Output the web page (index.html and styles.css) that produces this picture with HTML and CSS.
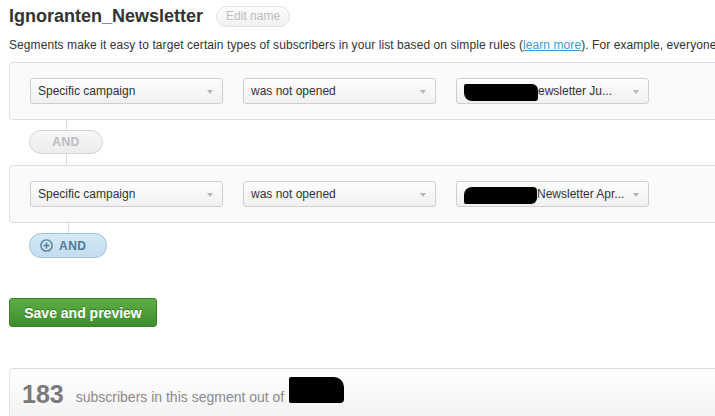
FILE: index.html
```html
<!DOCTYPE html>
<html lang="en">
<head>
    <meta charset="UTF-8" />
    <title>Ignoranten_Newsletter - Segment</title>
    <link rel="stylesheet" href="styles.css">
</head>
<body>
    <div class="page">
        <div class="title-row">
            <h1>Ignoranten_Newsletter</h1>
            <button class="edit-name" type="button">Edit name</button>
        </div>
        <p class="intro">Segments make it easy to target certain types of subscribers in your list based on simple rules (<a href="#">learn more</a>). For example, everyone</p>

        <div class="rule">
            <div class="select"><span class="select-text">Specific campaign</span><span class="caret"></span></div>
            <div class="select"><span class="select-text">was not opened</span><span class="caret"></span></div>
            <div class="select"><span class="select-text"><span class="redact"></span>ewsletter Ju...</span><span class="caret"></span></div>
        </div>

        <div class="connector">
            <span class="line line-top"></span>
            <button class="and-btn" type="button" disabled>AND</button>
            <span class="line line-bottom"></span>
        </div>

        <div class="rule">
            <div class="select"><span class="select-text">Specific campaign</span><span class="caret"></span></div>
            <div class="select"><span class="select-text">was not opened</span><span class="caret"></span></div>
            <div class="select"><span class="select-text"><span class="redact redact-2"></span>Newsletter Apr...</span><span class="caret"></span></div>
        </div>

        <div class="connector connector-last">
            <span class="line line-top"></span>
            <button class="add-and" type="button">
                <svg width="13" height="13" viewBox="0 0 13 13">
                    <circle cx="6.5" cy="6.5" r="5.6" fill="none" stroke="#4f7a99" stroke-width="1.4" />
                    <path d="M6.5 3.6v5.8M3.6 6.5h5.8" stroke="#4f7a99" stroke-width="1.4" />
                </svg>
                AND
            </button>
        </div>

        <button class="save-btn" type="button">Save and preview</button>

        <div class="summary">
            <span class="count">183</span>
            <span class="summary-text">subscribers in this segment out of</span>
            <span class="redact redact-total"></span>
        </div>
    </div>
</body>
</html>
```

FILE: styles.css
```css
html, body {
    margin: 0;
    padding: 0;
    overflow: hidden;
    background: #fff;
}

body {
    font-family: "Liberation Sans", Arial, sans-serif;
    color: #333;
}

.page {
    width: 900px;
    padding: 4px 0 0 9px;
}

/* Title */
.title-row {
    display: flex;
    align-items: center;
    gap: 13px;
    height: 23px;
}

h1 {
    margin: 0;
    font-size: 18px;
    line-height: 22px;
    font-weight: bold;
    color: #333;
}

.edit-name {
    font-family: inherit;
    font-size: 12px;
    color: #bdbdbd;
    background: linear-gradient(#fdfdfd, #f1f1f1);
    border: 1px solid #e2e2e2;
    border-radius: 11px;
    height: 21px;
    padding: 0 9px;
    margin-top: 1px;
}

.intro {
    margin: 11px 0 0;
    font-size: 12px;
    line-height: 15px;
    letter-spacing: 0.08px;
    white-space: nowrap;
    color: #333;
}

.intro a {
    color: #3c9ad3;
}

/* Rule panels */
.rule {
    display: flex;
    gap: 20px;
    margin-top: 9px;
    padding: 15px 20px;
    background: #fafafa;
    border: 1px solid #dedede;
    border-radius: 4px;
}

.connector + .rule {
    margin-top: 0;
}

.select {
    height: 24px;
    width: 184px;
    display: flex;
    align-items: center;
    justify-content: space-between;
    padding: 0 0 0 7px;
    background: linear-gradient(#fdfdfd, #f0f0f0);
    border: 1px solid #cfcfcf;
    border-radius: 3px;
    font-size: 12px;
    color: #333;
}

.select-text {
    white-space: nowrap;
    overflow: hidden;
    display: flex;
    align-items: center;
}

.caret {
    width: 0;
    height: 0;
    border-left: 3.5px solid transparent;
    border-right: 3.5px solid transparent;
    border-top: 4px solid #b5b5b5;
    margin-right: 9px;
    margin-top: 1px;
}

.redact {
    display: inline-block;
    width: 74px;
    height: 17px;
    background: #000;
    border-radius: 2px 6px 3px 8px;
    margin-top: 3px;
}

.redact-2 {
    width: 73px;
    border-radius: 8px 4px 6px 2px;
}

/* AND connectors */
.connector {
    display: flex;
    flex-direction: column;
    align-items: center;
    width: 74px;
    margin-left: 20px;
}

.line {
    display: block;
    width: 1px;
    background: #dcdcdc;
}

.line-top {
    height: 10px;
}

.line-bottom {
    height: 11px;
}

.and-btn {
    width: 74px;
    height: 24px;
    font-family: inherit;
    font-size: 12px;
    font-weight: bold;
    letter-spacing: 0.5px;
    color: #bcbcbc;
    background: linear-gradient(#f7f7f7, #ececec);
    border: 1px solid #d4d4d4;
    border-radius: 12px;
    padding: 0;
}

.connector-last {
    width: 78px;
}

.connector-last .line-top {
    height: 10px;
}

.add-and {
    display: flex;
    align-items: center;
    gap: 6px;
    width: 78px;
    height: 25px;
    padding: 0 0 0 10px;
    font-family: inherit;
    font-size: 12px;
    font-weight: bold;
    letter-spacing: 0.5px;
    color: #4f7a99;
    background: linear-gradient(#d6e9f5, #c3dcee);
    border: 1px solid #9fc2da;
    border-radius: 12px;
}

/* Save */
.save-btn {
    display: block;
    margin-top: 40px;
    width: 148px;
    height: 29px;
    font-family: inherit;
    font-size: 14px;
    font-weight: bold;
    color: #fff;
    text-shadow: 0 -1px 0 rgba(0, 0, 0, 0.3);
    background: linear-gradient(#5eae45, #3e8c2d);
    border: 1px solid #3a7f2a;
    border-radius: 3px;
    padding: 0;
}

/* Summary */
.summary {
    display: flex;
    align-items: flex-start;
    margin-top: 41px;
    height: 60px;
    padding: 0 0 0 12px;
    background: linear-gradient(#ffffff, #efefef);
    border-top: 1px solid #dadada;
    border-left: 1px solid #e4e4e4;
    border-radius: 5px 0 0 0;
}

.count {
    font-size: 25px;
    font-weight: bold;
    color: #7a7a7a;
    margin-top: 11px;
}

.summary-text {
    font-size: 14px;
    color: #8a8a8a;
    margin: 20px 0 0 12px;
}

.redact-total {
    width: 55px;
    height: 26px;
    margin: 8px 0 0 5px;
    border-radius: 2px 10px 4px 2px;
}
```
